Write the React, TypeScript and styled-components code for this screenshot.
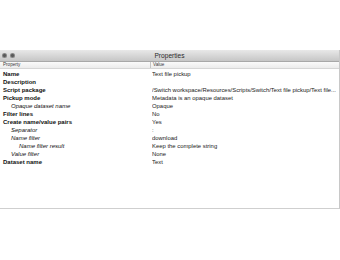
import React from 'react';
import styled, { createGlobalStyle } from 'styled-components';

const rows = [
  { name: 'Name', value: 'Text file pickup', level: 0 },
  { name: 'Description', value: '', level: 0 },
  { name: 'Script package', value: '/Switch workspace/Resources/Scripts/Switch/Text file pickup/Text file...', level: 0 },
  { name: 'Pickup mode', value: 'Metadata is an opaque dataset', level: 0 },
  { name: 'Opaque dataset name', value: 'Opaque', level: 1 },
  { name: 'Filter lines', value: 'No', level: 0 },
  { name: 'Create name/value pairs', value: 'Yes', level: 0 },
  { name: 'Separator', value: ':', level: 1 },
  { name: 'Name filter', value: 'download', level: 1 },
  { name: 'Name filter result', value: 'Keep the complete string', level: 2 },
  { name: 'Value filter', value: 'None', level: 1 },
  { name: 'Dataset name', value: 'Text', level: 0 },
];

const GlobalStyle = createGlobalStyle`
  html, body {
    margin: 0;
    padding: 0;
    background: #ffffff;
  }
  body {
    font-family: "Liberation Sans", Arial, sans-serif;
  }
`;

const Page = styled.div`
  width: 340px;
  height: 260px;
  padding-top: 50px;
  box-sizing: border-box;
`;

const Window = styled.div`
  width: 340px;
  height: 159px;
  box-sizing: border-box;
  border-right: 1px solid #c8c8c8;
  border-bottom: 1px solid #cfcfcf;
  display: flex;
  flex-direction: column;
  background: #ffffff;
`;

const TitleBar = styled.div`
  height: 11px;
  display: flex;
  align-items: center;
  position: relative;
  background: linear-gradient(#e8e8e8, #c6c6c6);
  border-bottom: 1px solid #a8a8a8;
  padding-left: 2px;
  gap: 2.5px;
`;

const Dot = styled.span`
  width: 5px;
  height: 5px;
  border-radius: 50%;
  background: radial-gradient(circle at 50% 50%, #5a5a5a 30%, #8a8a8a 60%, #4a4a4a);
  position: relative;
  z-index: 1;
`;

const Title = styled.div`
  position: absolute;
  left: 0;
  right: 0;
  text-align: center;
  font-size: 6.6px;
  color: #2a2a2a;
`;

const HeaderRow = styled.div`
  display: grid;
  grid-template-columns: 150px 1fr;
  height: 6px;
  align-items: center;
  background: linear-gradient(#fbfbfb, #ececec);
  border-bottom: 1px solid #d6d6d6;
`;

const HeaderCell = styled.div<{ $divider?: boolean }>`
  font-size: 4.6px;
  color: #3a3a3a;
  padding-left: ${({ $divider }) => ($divider ? '2px' : '3px')};
  border-left: ${({ $divider }) => ($divider ? '1px solid #c4c4c4' : 'none')};
  line-height: 6px;
`;

const Body = styled.div`
  padding-top: 1px;
  display: flex;
  flex-direction: column;
`;

const Row = styled.div`
  display: grid;
  grid-template-columns: 152px 1fr;
  height: 8px;
  align-items: center;
`;

const NameCell = styled.div<{ $level: number }>`
  padding-left: ${({ $level }) => 3 + $level * 8}px;
  font-size: 6px;
  font-weight: ${({ $level }) => ($level === 0 ? 700 : 400)};
  font-style: ${({ $level }) => ($level === 0 ? 'normal' : 'italic')};
  color: #111;
  white-space: nowrap;
`;

const ValueCell = styled.div`
  font-size: 5.9px;
  color: #1a1a1a;
  white-space: nowrap;
  overflow: hidden;
`;

export default function App() {
  return (
    <>
      <GlobalStyle />
      <Page>
        <Window>
          <TitleBar>
            <Dot />
            <Dot />
            <Title>Properties</Title>
          </TitleBar>
          <HeaderRow>
            <HeaderCell>Property</HeaderCell>
            <HeaderCell $divider>Value</HeaderCell>
          </HeaderRow>
          <Body>
            {rows.map(r => (
              <Row key={r.name}>
                <NameCell $level={r.level}>{r.name}</NameCell>
                <ValueCell>{r.value}</ValueCell>
              </Row>
            ))}
          </Body>
        </Window>
      </Page>
    </>
  );
}
